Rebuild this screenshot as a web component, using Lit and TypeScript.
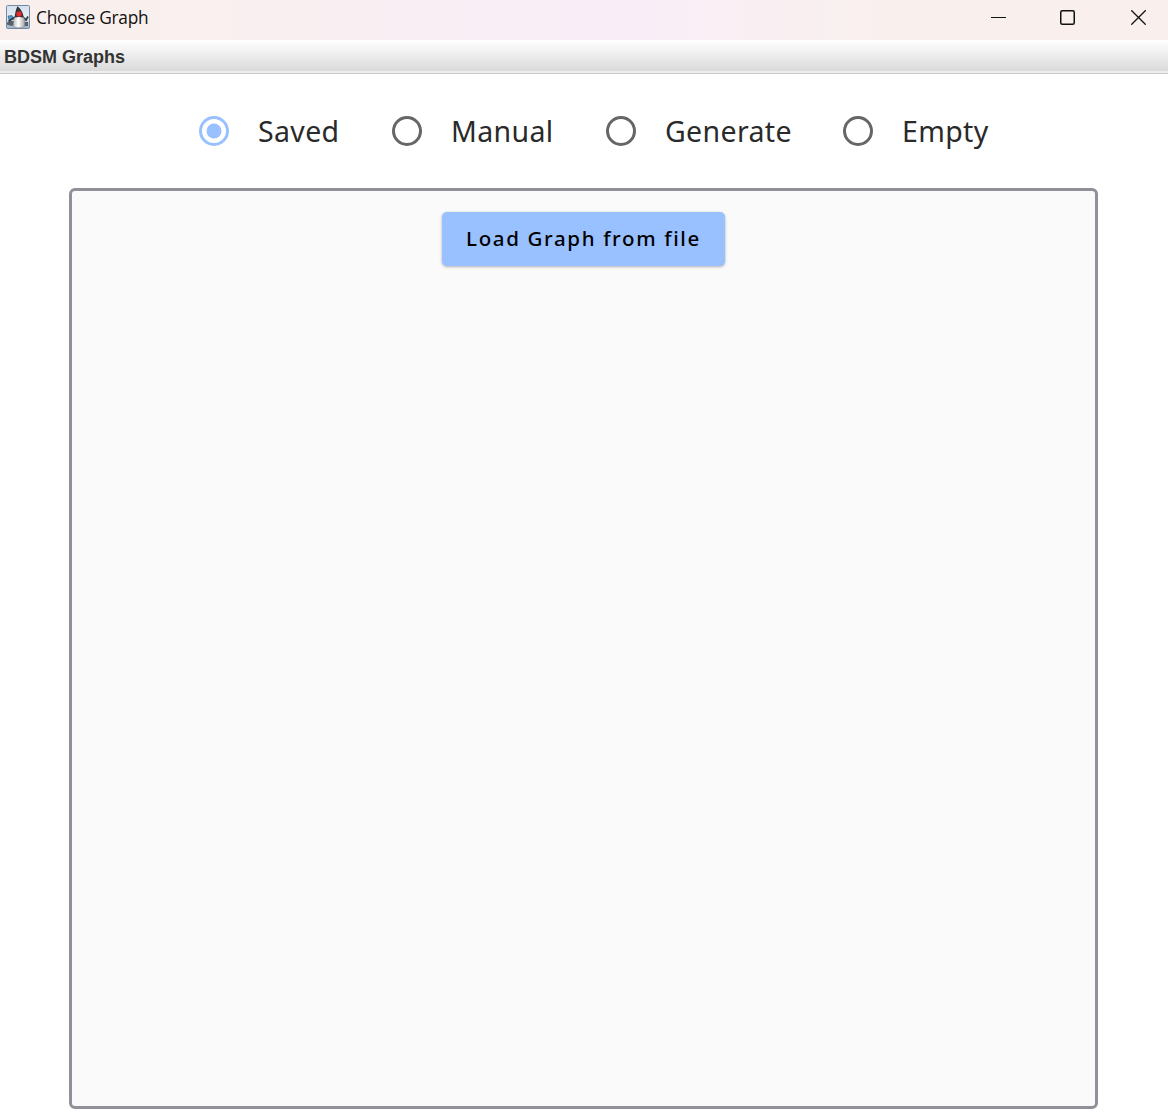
import { LitElement, html, css, svg } from "lit";
import { customElement, property, state } from "lit/decorators.js";

@customElement("duke-icon")
class DukeIcon extends LitElement {
  static styles = css`
    :host { display: block; width: 24px; height: 24px; }
    svg { display: block; }
  `;
  render() {
    return html`<svg width="24" height="24" viewBox="0 0 24 24" aria-hidden="true">
      <defs>
        <linearGradient id="bg" x1="0" y1="0" x2="0" y2="1">
          <stop offset="0" stop-color="#d3e0ed" />
          <stop offset="0.5" stop-color="#e6edf4" />
          <stop offset="1" stop-color="#9db2c8" />
        </linearGradient>
        <linearGradient id="body" x1="0" y1="0" x2="1" y2="0">
          <stop offset="0" stop-color="#c4c4c4" />
          <stop offset="0.45" stop-color="#ffffff" />
          <stop offset="1" stop-color="#a4a4a4" />
        </linearGradient>
      </defs>
      <rect x="0.5" y="0.5" width="23" height="23" rx="1" fill="url(#bg)" stroke="#7189a4" />
      <path d="M1 17.500l4-1.500h4v4l-4 1-4-1.500zM17 17h5v4h-5z" fill="#59626c" />
      <path d="M2 11l4-0.500 2 3.500-5 1z" fill="#4b9bcb" stroke="#31506a" stroke-width="0.6" />
      <path d="M2.500 16.500L6 14l3-2M16.500 11.500l3.500 3.500 2-3.500" fill="none" stroke="#343b43" stroke-width="1.700" />
      <path d="M9.500 9.500C8.500 14 6.500 18 8 22c3 1 8 1 10.500-0.500C19.500 17 18 12 16 9.500z" fill="url(#body)" stroke="#858585" stroke-width="0.5" />
      <path d="M11.500 1.300C10 4 9 8 8.700 12.500l4.300-0.500 4.500 0.500C17.500 8 14.800 4 11.500 1.300z" fill="#303238" />
      <circle cx="13" cy="9" r="2.700" fill="#e52a2e" />
    </svg>`;
  }
}

@customElement("radio-option")
class RadioOption extends LitElement {
  @property() label = "";
  @property({ type: Boolean }) selected = false;
  static styles = css`
    :host { display: flex; align-items: center; gap: 29px; height: 44px; cursor: pointer; }
    .mark { display: block; flex: none; color: #666; }
    .mark.on { color: #99c0ff; }
    .label { font: 400 28.500px/40px "Noto Sans", "Open Sans", sans-serif; color: #2a2a2a; white-space: nowrap; letter-spacing: 0.350px; }
  `;
  render() {
    return html`<svg class="mark ${this.selected ? "on" : ""}" width="30" height="30" viewBox="0 0 30 30">
        <circle cx="15" cy="15" r="13.500" fill="none" stroke="currentColor" stroke-width="3" />
        ${this.selected ? svg`<circle cx="15" cy="15" r="7.500" fill="currentColor" />` : ""}
      </svg>
      <span class="label">${this.label}</span>`;
  }
}

@customElement("app-root")
class AppRoot extends LitElement {
  @state() private choice = "Saved";
  static styles = css`
    :host { display: flex; flex-direction: column; box-sizing: border-box; width: 1168px; height: 1118px; overflow: hidden; background: #fff; }
    .titlebar { display: flex; align-items: center; height: 40px; padding: 0 0 6px 6px; box-sizing: border-box; background: linear-gradient(90deg, #f9f0ee 0, #f9f0ee 12%, #f9eef5 42%, #f9eef8 53%, #f9f0ee 76%); }
    .title { flex: 1; margin-left: 6px; padding-top: 2px; font: 17.300px/24px "Open Sans", sans-serif; letter-spacing: -0.220px; color: #111; }
    .controls { display: flex; padding-right: 22px; }
    .controls svg { display: block; width: 15px; height: 15px; fill: none; stroke: #111; }
    .minimize { margin-right: 54px; }
    .maximize { margin-right: 56px; }
    .menubar { height: 34px; box-sizing: border-box; padding: 0 4px; background: linear-gradient(#fff, #dadada 31px, #eee 31px); border-bottom: 1px solid #c8c8c8; font: bold 18px/34px "Liberation Sans", sans-serif; color: #333; }
    .options { display: grid; grid-template-columns: 193px 214px 237px auto; padding: 35px 0 35px 199px; }
    .panel { flex: none; box-sizing: border-box; height: 921px; margin: 0 70px 0 69px; padding-top: 21px; border: 3px solid #918f98; border-radius: 6px; background: #fafafa; display: flex; justify-content: center; align-items: flex-start; }
    .load { width: 283px; height: 54px; padding: 0 0 2px; border: 0; border-radius: 5px; background: #99c0ff; color: #000; font: 500 20.500px/52px "Noto Sans", "Open Sans", sans-serif; letter-spacing: 1.640px; white-space: nowrap; box-shadow: 0 1px 3px rgba(0, 0, 0, 0.3); }
  `;
  render() {
    return html`
      <header class="titlebar">
        <duke-icon></duke-icon>
        <span class="title">Choose Graph</span>
        <div class="controls">
          <svg class="minimize" viewBox="0 0 15 15"><path d="M0 7.500h15" /></svg>
          <svg class="maximize" viewBox="0 0 15 15"><rect x="0.750" y="0.750" width="13.500" height="13.500" rx="1.500" stroke-width="1.500" /></svg>
          <svg viewBox="0 0 15 15"><path d="M0.300 0.300l14.400 14.400M14.700 0.300L0.300 14.700" stroke-width="1.300" /></svg>
        </div>
      </header>
      <nav class="menubar">BDSM Graphs</nav>
      <div class="options">
        ${["Saved", "Manual", "Generate", "Empty"].map(
          (name) => html`<radio-option .label=${name} .selected=${this.choice === name} @click=${() => (this.choice = name)}></radio-option>`
        )}
      </div>
      <main class="panel"><button class="load">Load Graph from file</button></main>
    `;
  }
}
